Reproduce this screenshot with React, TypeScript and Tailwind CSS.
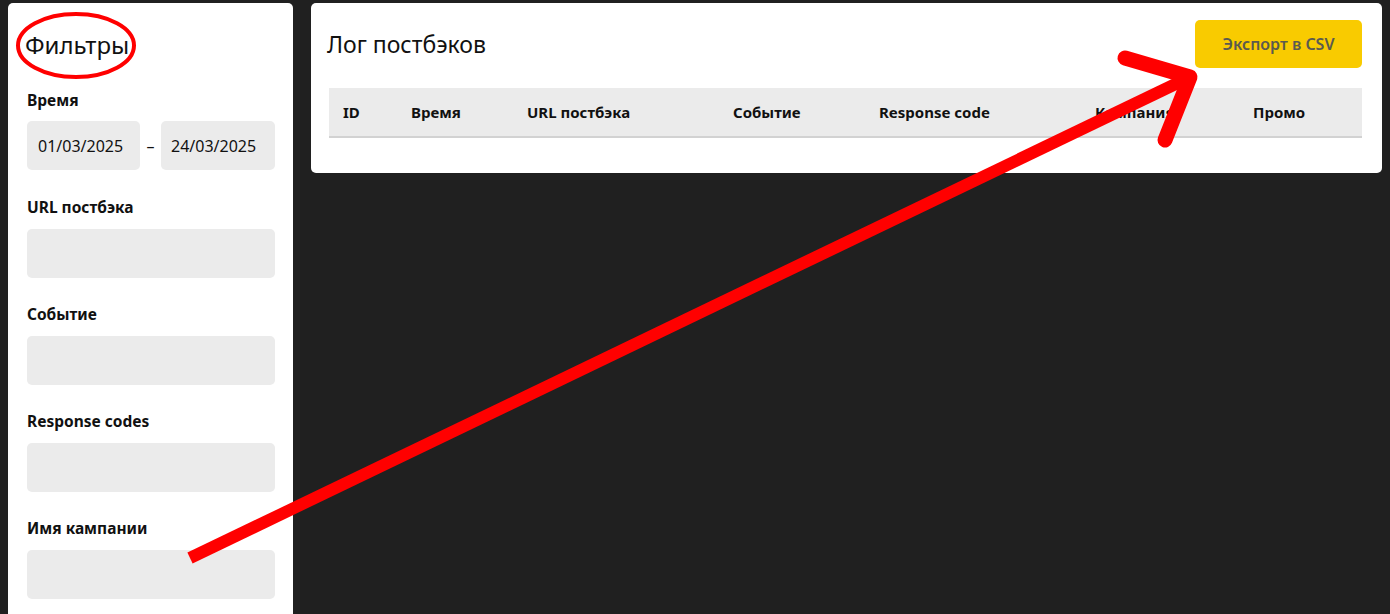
import React from 'react';

const font = { fontFamily: '"Noto Sans", "Open Sans", sans-serif' };

const filters = ['URL постбэка', 'Событие', 'Response codes', 'Имя кампании'];

const columns = [
  { label: 'ID', w: 'w-[68px]' },
  { label: 'Время', w: 'w-[116px]' },
  { label: 'URL постбэка', w: 'w-[206px]' },
  { label: 'Событие', w: 'w-[146px]' },
  { label: 'Response code', w: 'w-[216px]' },
  { label: 'Кампания', w: 'w-[158px]' },
  { label: 'Промо', w: 'flex-1' },
];

function Annotations() {
  return (
    <svg
      className="absolute inset-0 pointer-events-none"
      width="1390"
      height="614"
      viewBox="0 0 1390 614"
    >
      <ellipse cx="76" cy="45.5" rx="58" ry="31.5" fill="none" stroke="#ff0000" strokeWidth="4" />
      <line x1="190" y1="558" x2="1186" y2="79" stroke="#ff0000" strokeWidth="12" />
      <polyline
        points="1125,58 1190,77 1165,140"
        fill="none"
        stroke="#ff0000"
        strokeWidth="15"
        strokeLinecap="round"
        strokeLinejoin="round"
      />
    </svg>
  );
}

export default function App() {
  return (
    <div className="relative h-[614px] w-full overflow-hidden bg-[#202020] text-[#111]" style={font}>
      <div className="flex gap-[18px] pl-2 pr-2 pt-[3px] h-full">
        {/* sidebar */}
        <aside className="w-[285px] shrink-0 bg-white rounded-t-[5px] pl-[19px] pr-[18px] pt-[26px] h-[700px]">
          <h2 className="text-[24px] leading-[32px] font-normal -ml-[2px]">Фильтры</h2>

          <div className="mt-[29px] mb-[27px]">
            <div className="text-[15.5px] leading-[20px] font-bold">Время</div>
            <div className="mt-[11px] flex items-center">
              <div className="w-[113px] h-[49px] rounded-[5px] bg-[#ebebeb] flex items-center pl-[11px] text-[16px]">
                01/03/2025
              </div>
              <div className="flex-1 text-center text-[16px]">–</div>
              <div className="w-[114px] h-[49px] rounded-[5px] bg-[#ebebeb] flex items-center pl-[10px] text-[16px]">
                24/03/2025
              </div>
            </div>
          </div>

          <div className="flex flex-col gap-[26px]">
            {filters.map(f => (
              <div key={f}>
                <div className="text-[15.5px] leading-[20px] font-bold">{f}</div>
                <div className="mt-[12px] h-[49px] rounded-[5px] bg-[#ebebeb]" />
              </div>
            ))}
          </div>
        </aside>

        {/* main */}
        <main className="flex-1 self-start bg-white rounded-[5px] pl-[18px] pr-[20px] pt-[17px] pb-[35px]">
          <div className="flex items-center justify-between h-[48px]">
            <h1 className="text-[23px] leading-[30px] font-normal -ml-[2px]">Лог постбэков</h1>
            <button className="w-[167px] h-[48px] rounded-[5px] bg-[#f9cb00] text-[#5b5a4f] text-[16px] font-semibold">
              Экспорт в CSV
            </button>
          </div>

          <div className="mt-[20px] h-[50px] bg-[#ebebeb] border-b-2 border-[#d2d2d2] flex items-center pl-[14px]">
            {columns.map(c => (
              <div key={c.label} className={`${c.w} text-[15px] font-bold whitespace-nowrap`}>
                {c.label}
              </div>
            ))}
          </div>
        </main>
      </div>
      <Annotations />
    </div>
  );
}
